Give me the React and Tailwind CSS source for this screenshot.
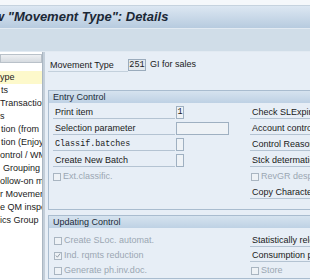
import React from "react";

const treeItems = [
  { t: "ype", sel: true, pl: 0 },
  { t: "ts", pl: 1 },
  { t: "Transactions", pl: 0 },
  { t: "s", pl: 0 },
  { t: "tion (from", pl: 1 },
  { t: "tion (Enjoy", pl: 1 },
  { t: "ontrol / WM", pl: 0 },
  { t: "Grouping", pl: 3 },
  { t: "ollow-on m", pl: 0 },
  { t: "r Movemen", pl: 0 },
  { t: "e QM inspe", pl: 0 },
  { t: "ics Group", pl: 0 },
];

function Check({ checked }) {
  return (
    <span className="w-[8px] h-[8px] border border-[#a9b5c1] bg-[#eef2f6] flex items-center justify-center shrink-0">
      {checked && (
        <svg width="7" height="7" viewBox="0 0 7 7">
          <path d="M1 3.5 L2.8 5.5 L6 1.2" fill="none" stroke="#8a96a3" strokeWidth="1.1" />
        </svg>
      )}
    </span>
  );
}

function Label({ children, mono, w }) {
  return (
    <div
      className={`h-[13px] leading-[13px] border-b border-[#b4c3d2] pl-[2px] whitespace-nowrap overflow-hidden ${w} ${
        mono ? "font-['Liberation_Mono',monospace] text-[8.4px]" : ""
      }`}
    >
      {children}
    </div>
  );
}

function Box({ w, children }) {
  return (
    <div
      className={`h-[13px] ${w} ml-[1px] border border-[#9fb0c1] bg-[#eef2f6] text-center leading-[11px] shrink-0 font-['Liberation_Mono',monospace] text-[8.5px]`}
    >
      {children}
    </div>
  );
}

function Disabled({ children, checked, h = "h-[16px]" }) {
  return (
    <div className={`${h} flex items-center gap-[2px] text-[#9ba7b3] whitespace-nowrap`}>
      <Check checked={checked} />
      <span>{children}</span>
    </div>
  );
}

export default function App() {
  return (
    <div className="w-[310px] h-[280px] overflow-hidden bg-[#e7eef6] font-['Liberation_Sans',Arial,sans-serif] text-[9px] text-[#1a1a1a] flex flex-col">
      <div className="h-[6px] shrink-0 bg-[#f5f8fb] border-b border-[#c6d3df]" />
      <div className="h-[22px] shrink-0 bg-gradient-to-b from-[#dce7f2] to-[#b7cbdf] flex items-center overflow-hidden">
        <span className="ml-[-6px] text-[13px] font-bold italic whitespace-nowrap text-[#1b2836]">
          w "Movement Type": Details
        </span>
      </div>
      <div className="h-[24px] shrink-0 bg-[#d0dde8] border-t border-[#e2eaf2] border-b border-[#aebfd0]" />
      <div className="flex flex-1 min-h-0">
        {/* tree */}
        <div className="w-[42px] shrink-0 bg-white overflow-hidden pt-[2px]">
          <div className="h-[9px] bg-gradient-to-b from-[#eef0f3] to-[#d6dbe0] border border-[#b9c1c9]" />
          <div className="mt-[8px]">
            {treeItems.map((it, i) => (
              <div
                key={i}
                className={`h-[13px] leading-[13px] whitespace-nowrap ${it.sel ? "bg-[#fdf9cb]" : ""}`}
                style={{ paddingLeft: it.pl }}
              >
                {it.t}
              </div>
            ))}
          </div>
        </div>
        <div className="w-[3px] shrink-0 bg-[#c3ced9] border-l border-[#aab6c2]" />
        {/* main */}
        <div className="flex-1 min-w-0 overflow-hidden pl-[3px]">
          <div className="mt-[6px] h-[14px] flex items-center">
            <div className="w-[80px] pl-[2px] h-[13px] leading-[13px] border-b border-[#c3d0dc]">Movement Type</div>
            <div className="h-[12px] w-[18px] border border-[#9aabbc] bg-[#e4e9ee] leading-[10px] text-center font-['Liberation_Mono',monospace] text-[8.5px]">
              251
            </div>
            <span className="ml-[4px]">GI for sales</span>
          </div>

          {/* Entry Control */}
          <div className="mt-[18px] w-[300px] border border-[#a9bccf]">
            <div className="h-[12px] leading-[12px] pl-[4px] bg-gradient-to-b from-[#d6e3ef] to-[#bed1e4] text-[#1b2a39]">
              Entry Control
            </div>
            <div className="pt-[2px] pb-[8px] pl-[4px] flex">
              <div className="w-[197px] shrink-0">
                <div className="h-[16px] flex items-start pt-[1px]">
                  <Label w="w-[122px]">Print item</Label>
                  <Box w="w-[8px]">1</Box>
                </div>
                <div className="h-[16px] flex items-start pt-[1px]">
                  <Label w="w-[122px]">Selection parameter</Label>
                  <Box w="w-[53px]" />
                </div>
                <div className="h-[16px] flex items-start pt-[1px]">
                  <Label w="w-[122px]" mono>
                    Classif.batches
                  </Label>
                  <Box w="w-[8px]" />
                </div>
                <div className="h-[16px] flex items-start pt-[1px]">
                  <Label w="w-[122px]">Create New Batch</Label>
                  <Box w="w-[8px]" />
                </div>
                <Disabled>Ext.classific.</Disabled>
              </div>
              <div className="flex-1">
                <div className="h-[16px] pt-[1px]">
                  <Label>Check SLExpir.date</Label>
                </div>
                <div className="h-[16px] pt-[1px]">
                  <Label>Account control</Label>
                </div>
                <div className="h-[16px] pt-[1px]">
                  <Label>Control Reason</Label>
                </div>
                <div className="h-[16px] pt-[1px]">
                  <Label>Stck determation</Label>
                </div>
                <div className="pl-[1px]">
                  <Disabled>RevGR despite IR</Disabled>
                </div>
                <div className="h-[16px] pt-[1px]">
                  <Label>Copy Characteristics</Label>
                </div>
              </div>
            </div>
          </div>

          {/* Updating Control */}
          <div className="mt-[5px] w-[300px] border border-[#a9bccf]">
            <div className="h-[12px] leading-[12px] pl-[4px] bg-gradient-to-b from-[#d6e3ef] to-[#bed1e4] text-[#1b2a39]">
              Updating Control
            </div>
            <div className="pt-[5px] pl-[5px] flex">
              <div className="w-[196px] shrink-0">
                <Disabled h="h-[15px]">Create SLoc. automat.</Disabled>
                <Disabled h="h-[15px]" checked>
                  Ind. rqmts reduction
                </Disabled>
                <Disabled h="h-[15px]">Generate ph.inv.doc.</Disabled>
              </div>
              <div className="flex-1">
                <div className="h-[15px] pt-[1px]">
                  <Label>Statistically relevant</Label>
                </div>
                <div className="h-[15px] pt-[1px]">
                  <Label>Consumption posting</Label>
                </div>
                <div className="pl-[1px]">
                  <Disabled h="h-[15px]">Store</Disabled>
                </div>
              </div>
            </div>
          </div>
        </div>
      </div>
    </div>
  );
}
